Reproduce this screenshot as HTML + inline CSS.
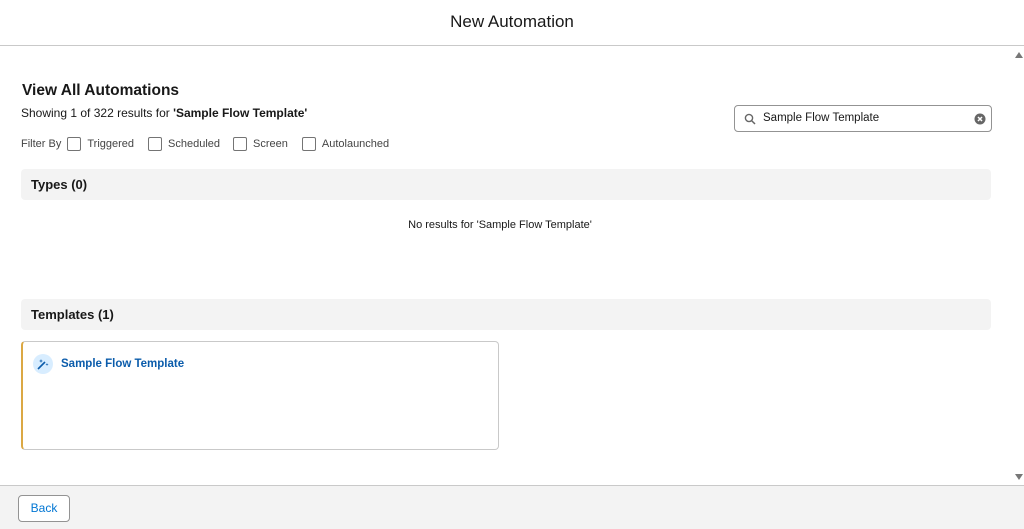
<!DOCTYPE html>
<html><head><style>
*{box-sizing:border-box;margin:0;padding:0}
body{width:1024px;height:529px;position:relative;background:#fff;font-family:"Liberation Sans",sans-serif;color:#181818;overflow:hidden;font-size:12px}
.hdr{position:absolute;top:0;left:0;width:1024px;height:46px;border-bottom:1px solid #c9c9c9;text-align:center;line-height:44px;font-size:17px;color:#181818}
.abs{position:absolute}
.cb{display:inline-block;width:14px;height:14px;border:1px solid #747474;border-radius:2px;vertical-align:middle;margin:0 6px}
.bar{position:absolute;left:21px;width:970px;height:31px;background:#f3f3f3;border-radius:4px;font-weight:bold;font-size:13px;line-height:31px;padding-left:10px}
.foot{position:absolute;top:485px;left:0;width:1024px;height:44px;background:#f3f3f3;border-top:1px solid #c9c9c9}
</style></head><body>
<div class="hdr">New Automation</div>
<div class="abs" style="left:1015px;top:52px;width:0;height:0;border-left:4px solid transparent;border-right:4px solid transparent;border-bottom:6px solid #777"></div>
<div class="abs" style="left:1015px;top:474px;width:0;height:0;border-left:4px solid transparent;border-right:4px solid transparent;border-top:6px solid #777"></div>
<div class="abs" style="left:22px;top:82px;font-size:15.5px;font-weight:bold">View All Automations</div>
<div class="abs" style="left:21px;top:106px;font-size:12px">Showing 1 of 322 results for <b>'Sample Flow Template'</b></div>
<div class="abs" style="left:21px;top:137px;font-size:11px;color:#444">Filter By<span class="cb" style="margin-left:6px"></span>Triggered<span class="cb" style="margin-left:14px"></span>Scheduled<span class="cb" style="margin-left:13px"></span>Screen<span class="cb" style="margin-left:14px"></span>Autolaunched</div>
<div class="abs" style="left:734px;top:105px;width:258px;height:27px;border:1px solid #939393;border-radius:4px;font-size:11.5px;line-height:25px;padding-left:28px">
<svg class="abs" style="left:9px;top:7px" width="12" height="12" viewBox="0 0 12 12"><circle cx="5" cy="5" r="3.6" fill="none" stroke="#666" stroke-width="1.4"/><path d="M7.6 7.6L11 11" stroke="#666" stroke-width="1.5"/></svg>
Sample Flow Template
<svg class="abs" style="left:239px;top:7px" width="12" height="12" viewBox="0 0 12 12"><circle cx="6" cy="6" r="5.5" fill="#666"/><path d="M4 4L8 8M8 4L4 8" stroke="#fff" stroke-width="1.5"/></svg>
</div>
<div class="bar" style="top:169px">Types (0)</div>
<div class="abs" style="left:0;width:1000px;top:219px;text-align:center;font-size:11px">No results for 'Sample Flow Template'</div>
<div class="bar" style="top:299px">Templates (1)</div>
<div class="abs" style="left:21px;top:341px;width:478px;height:109px;border:1px solid #c9c9c9;border-left:2px solid #dba844;border-radius:4px"></div>
<div class="abs" style="left:33px;top:354px;width:20px;height:20px;border-radius:50%;background:#d8edff">
<svg width="20" height="20" viewBox="0 0 20 20"><path d="M5 15L12 8" stroke="#0b5cab" stroke-width="1.6"/><path d="M8 5l.5 1.5L10 7l-1.5.5L8 9l-.5-1.5L6 7l1.5-.5z M14 9l.4 1.2 1.2.4-1.2.4L14 12l-.4-1.2-1.2-.4 1.2-.4z" fill="#0b5cab"/></svg>
</div>
<div class="abs" style="left:61px;top:358px;font-size:11.5px;font-weight:bold;color:#0b5cab">Sample Flow Template</div>
<div class="foot"></div>
<div class="abs" style="left:18px;top:495px;width:52px;height:27px;border:1px solid #939393;border-radius:4px;background:#fff;color:#0176d3;font-size:12px;text-align:center;line-height:25px">Back</div>
</body></html>
